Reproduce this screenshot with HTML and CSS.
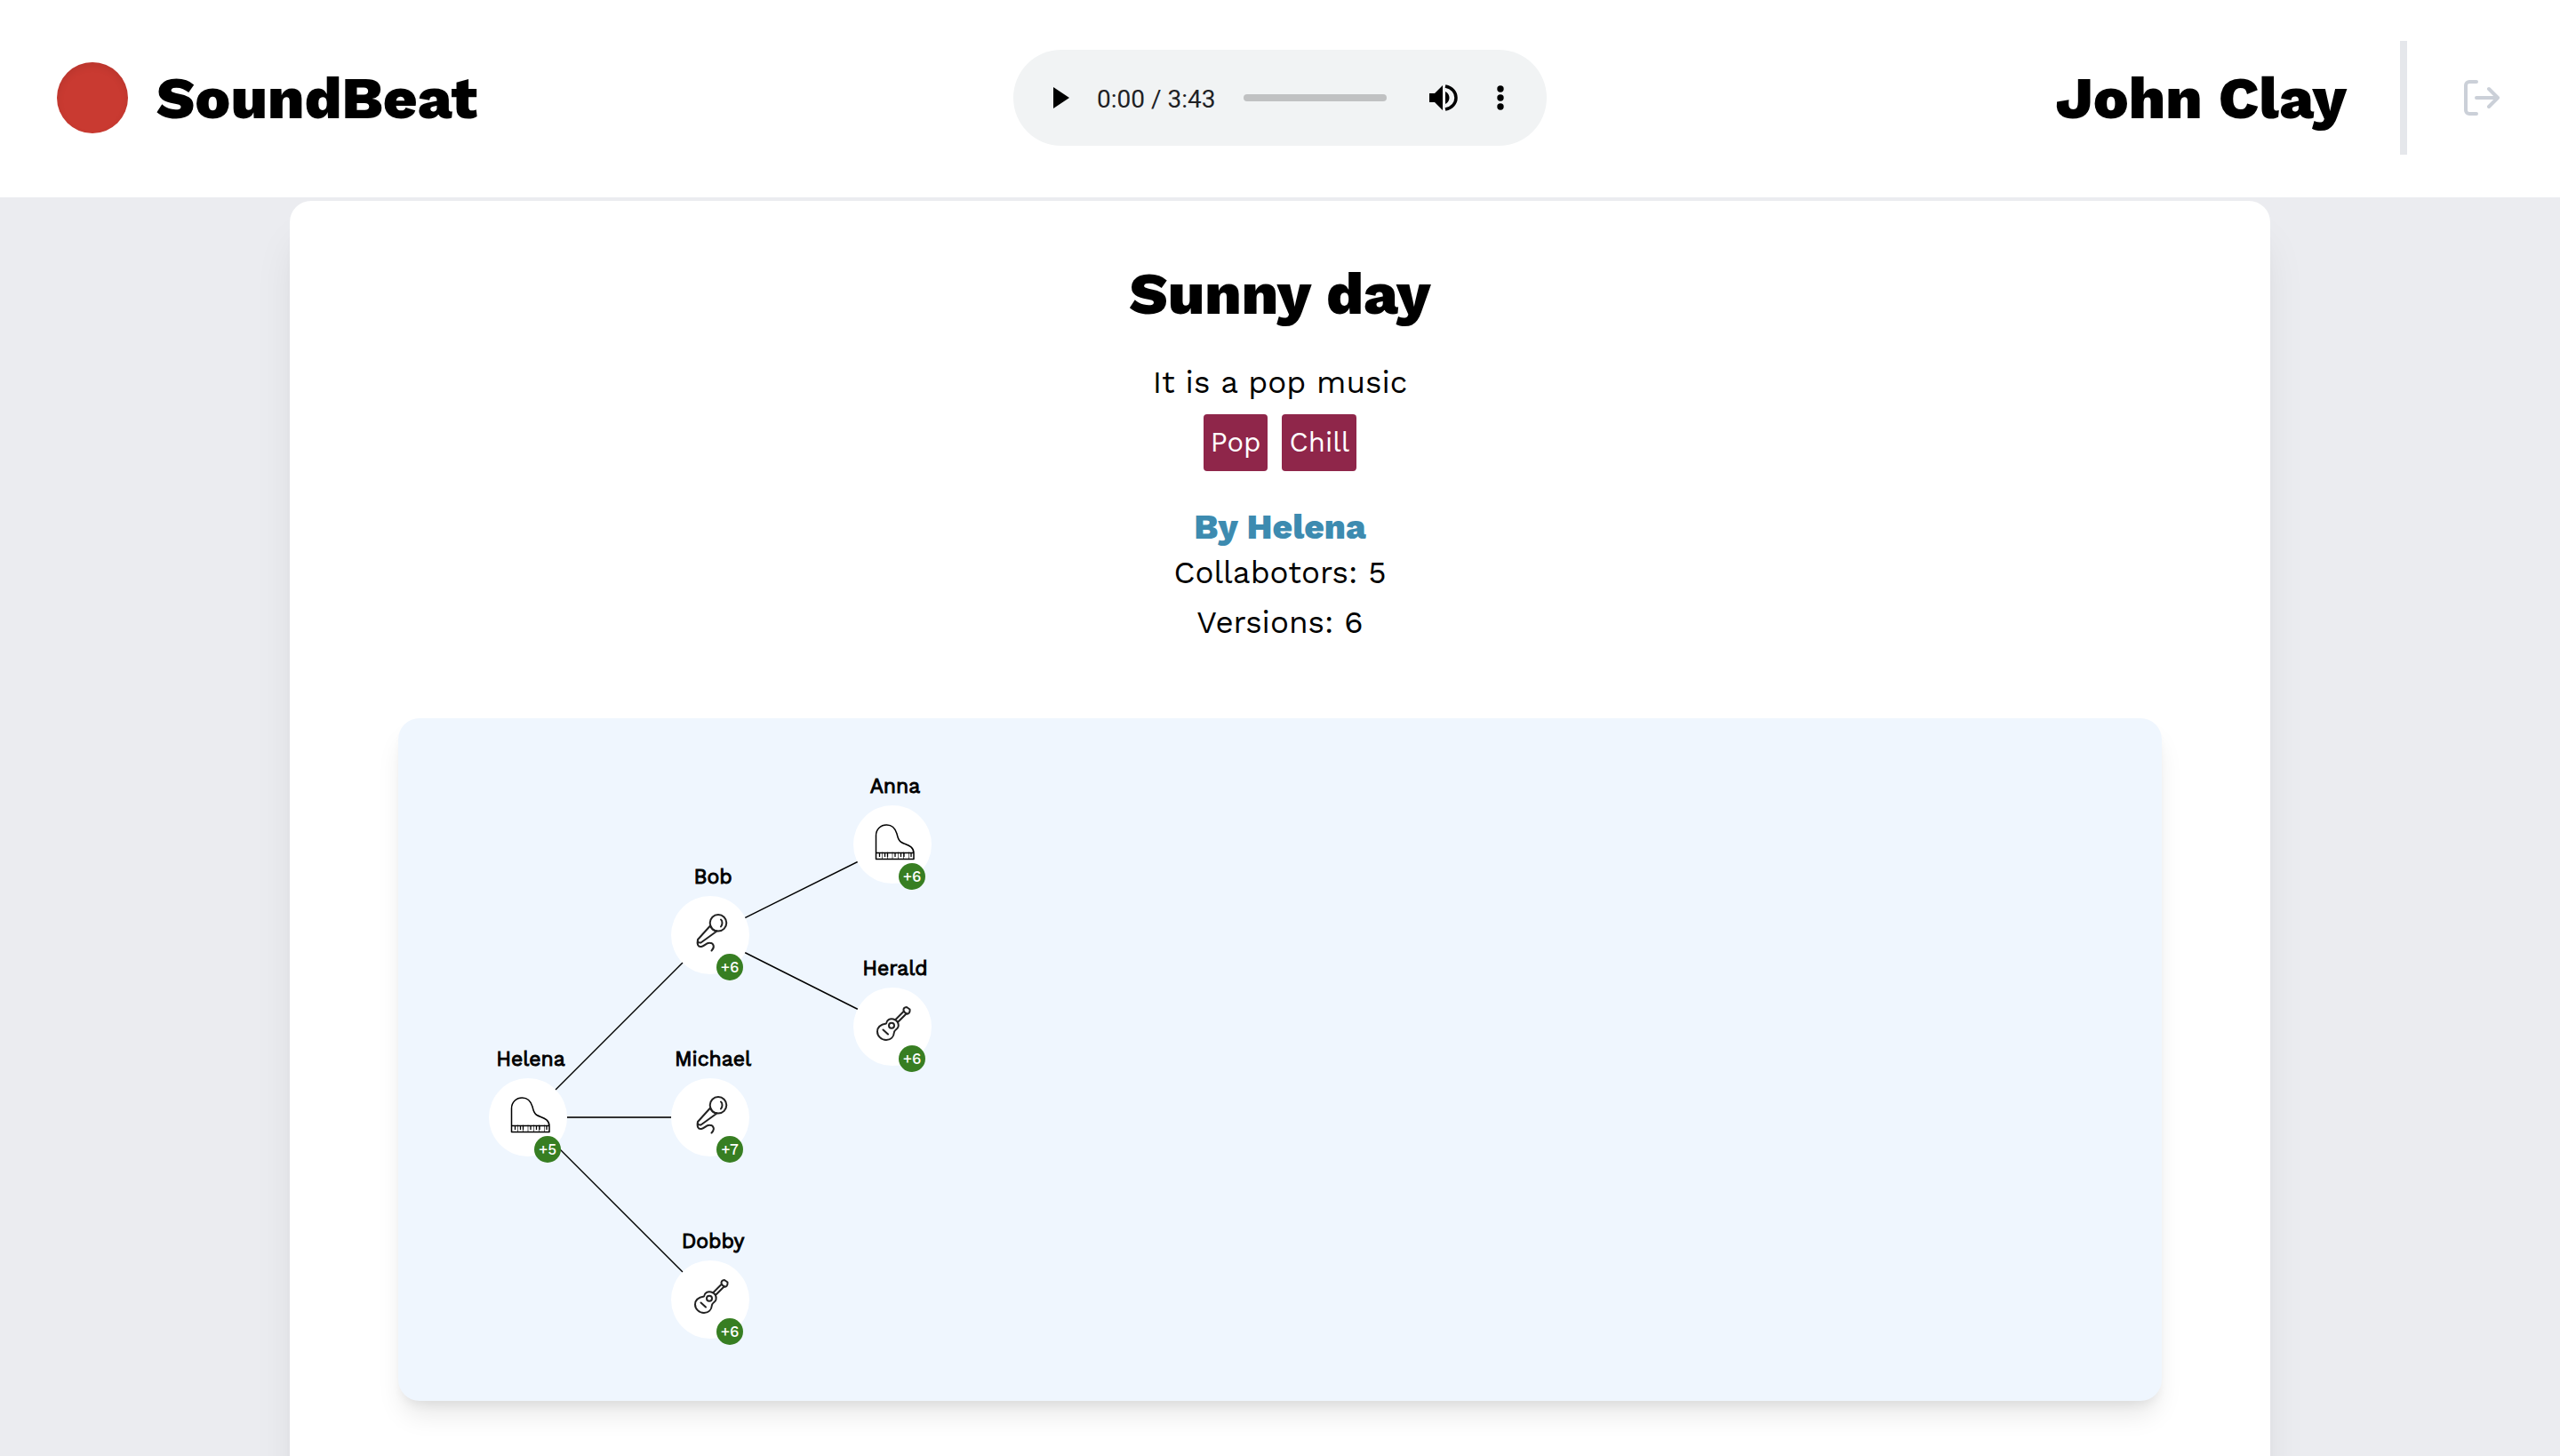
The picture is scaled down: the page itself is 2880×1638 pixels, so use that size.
FILE: index.html
```html
<!DOCTYPE html>
<html lang="en">
<head>
<meta charset="utf-8">
<title>SoundBeat</title>
<link rel="stylesheet" href="styles.css">
</head>
<body>
<svg class="sprite" aria-hidden="true">
  <symbol id="piano" viewBox="0 0 88 88">
    <path d="M25.500 54V34C25.500 26.500 31 22 37.500 22C44 22 47.500 27 49 32C50 36 50.500 39.500 54 41.500C59 44.500 68 45 68 54V60.500H25.500ZM25.500 53.500H68" stroke="#000" stroke-width="1.500"/>
    <path d="M32.500 53V60M38.500 53V60M44 53V60M50.500 53V60M56.500 53V60M62.500 53V60" stroke="#000" stroke-width=".6"/>
    <path d="M29.500 53.500V58M35.500 53.500V58M38.500 53.500V58M47 53.500V58M53.500 53.500V58M57 53.500V58M65 53.500V58" stroke="#000" stroke-width="1.300" stroke-linecap="butt"/>
  </symbol>
  <symbol id="mic" viewBox="0 0 88 88">
    <circle cx="53" cy="30.300" r="9.300"/>
    <path d="M56 26.500C58 28 58 32 56 34.500M44 33.500L30 49M51.500 39.500L33.500 52.500M44 33.500C45 36.500 48 39.500 51.500 39.500M30 49C29.500 51.500 31 53 33.500 52.500M30 49C29 54 30 57.500 34 57C38 56.500 39 52.500 43.500 52.800C48 53 49.500 57.500 45.500 61.500"/>
  </symbol>
  <symbol id="guitar" viewBox="0 0 88 88">
    <path d="M37 40.500C37.500 36.500 41 34.500 45 35.500C49 36.500 51.500 40 50.500 44C49.500 47.500 46.500 47 46 50C45.500 55.500 42 59 37 59C31.500 59 27 54.500 27 49.500C27 44 31 41.500 37 40.500ZM47 36.500L57 26.500M50 39L60 29M57 27C55.500 24 57.500 22 60 22L63.500 24.500C64 28 62 30.500 59.500 29.500ZM33.500 47.500L39 52.500"/>
    <circle cx="43" cy="42.700" r="3"/>
  </symbol>
</svg>

<header class="topbar">
  <a class="brand" href="#"><span class="brand-dot"></span>SoundBeat</a>
  <div class="player">
    <button class="player-play" aria-label="Play"><svg width="18" height="24" viewBox="0 0 18 24"><path d="M0 0L18 12L0 24Z"/></svg></button>
    <span class="player-time">0:00 / 3:43</span>
    <input class="player-track" type="range" min="0" max="223" value="0" aria-label="Position">
    <button class="player-volume" aria-label="Mute"><svg width="32" height="30" viewBox="0 0 32 30"><path d="M0 10H6L15 1V29L6 20H0ZM18 8C24 11 24 19 18 22Z"/><path d="M18 2C34 5 34 25 18 28" fill="none" stroke="#000" stroke-width="3.500"/></svg></button>
    <button class="player-more" aria-label="More options"><svg width="8" height="28" viewBox="0 0 8 28"><circle cx="4" cy="4" r="3.700"/><circle cx="4" cy="14" r="3.700"/><circle cx="4" cy="24" r="3.700"/></svg></button>
  </div>
  <div class="account">
    <span class="account-name">John Clay</span>
    <span class="divider"></span>
    <button class="logout" aria-label="Log out"><svg width="40" height="40" viewBox="0 0 40 40"><path d="M14 2H6a4 4 0 0 0-4 4v28a4 4 0 0 0 4 4h8M14 20h24M28 10l10 10-10 10"/></svg></button>
  </div>
</header>

<main class="card">
  <h1 class="title">Sunny day</h1>
  <p class="line">It is a pop music</p>
  <ul class="tags"><li>Pop</li><li>Chill</li></ul>
  <h2 class="author">By Helena</h2>
  <p class="line">Collabotors: 5</p>
  <p class="line">Versions: 6</p>

  <section class="tree" aria-label="Versions">
    <svg class="links" width="700" height="768" viewBox="0 0 700 768">
      <path d="M146 449L351 244L556 142M351 244L556 347M351 654L146 449"/>
      <path d="M146 449H351" class="link-flat"/>
    </svg>
    <div class="node" style="left:146px;top:449px"><span class="name">Helena</span><svg class="icon"><use href="#piano"/></svg><span class="badge">+5</span></div>
    <div class="node" style="left:351px;top:244px"><span class="name">Bob</span><svg class="icon"><use href="#mic"/></svg><span class="badge">+6</span></div>
    <div class="node" style="left:351px;top:449px"><span class="name">Michael</span><svg class="icon"><use href="#mic"/></svg><span class="badge">+7</span></div>
    <div class="node" style="left:351px;top:654px"><span class="name">Dobby</span><svg class="icon"><use href="#guitar"/></svg><span class="badge">+6</span></div>
    <div class="node" style="left:556px;top:142px"><span class="name">Anna</span><svg class="icon"><use href="#piano"/></svg><span class="badge">+6</span></div>
    <div class="node" style="left:556px;top:347px"><span class="name">Herald</span><svg class="icon"><use href="#guitar"/></svg><span class="badge">+6</span></div>
  </section>
</main>
</body>
</html>
```
FILE: styles.css
```css
* { box-sizing: border-box; }

body {
  margin: 0;
  background: #ebecf0;
  color: #000;
  font-family: "Work Sans", Inter, "Liberation Sans", sans-serif;
}

h1, h2, p, ul { margin: 0; padding: 0; }

html { scrollbar-width: none; }

button {
  display: flex;
  padding: 0;
  border: 0;
  background: none;
}

.sprite { position: absolute; width: 0; height: 0; }

.topbar {
  display: grid;
  grid-template-columns: 1fr 600px 1fr;
  align-items: center;
  height: 222px;
  padding: 0 64px 2px;
  background: #fff;
}

.brand,
.account-name,
.title {
  font-size: 67px;
  font-weight: 800;
  line-height: 80px;
}

.brand {
  display: flex;
  align-items: center;
  gap: 32px;
  color: #000;
  text-decoration: none;
}

.brand-dot {
  width: 80px;
  height: 80px;
  border-radius: 50%;
  background: #c93a31;
  box-shadow: inset 0 4px 8px rgba(0, 0, 0, .08);
}

.player {
  display: flex;
  align-items: center;
  height: 108px;
  padding: 0 48px 0 45px;
  border-radius: 54px;
  background: #f1f3f4;
}

.player-time {
  margin-left: 31px;
  padding-top: 4px;
  font: 28px/32px Roboto, sans-serif;
  color: #202124;
  white-space: nowrap;
}

.player-track {
  flex: 1;
  min-width: 0;
  height: 8px;
  margin: 0 48px 0 32px;
  border-radius: 4px;
  background: #c0c1c2;
  appearance: none;
}

.player-track::-webkit-slider-thumb { appearance: none; width: 0; height: 0; }

.player-more { margin-left: 44px; }

.account {
  display: flex;
  align-items: center;
  justify-content: flex-end;
}

.divider {
  width: 8px;
  height: 128px;
  margin: 0 64px 0 60px;
  background: #e5e7eb;
}

.logout { margin-right: 4px; }

.logout path {
  fill: none;
  stroke: #cbd0d8;
  stroke-width: 4;
  stroke-linecap: round;
  stroke-linejoin: round;
}

.card {
  margin: 4px 326px 0;
  padding: 64px 122px 96px;
  border-radius: 24px;
  background: #fff;
  box-shadow: 0 40px 50px -10px rgba(0, 0, 0, .1), 0 20px 20px -10px rgba(0, 0, 0, .04);
  text-align: center;
}

.title { margin-bottom: 32px; }

.line {
  font-size: 35px;
  line-height: 56px;
}

.tags {
  display: flex;
  justify-content: center;
  gap: 16px;
  margin: 8px 0 40px;
  list-style: none;
}

.tags li {
  padding: 0 8px;
  border-radius: 4px;
  background: #8f264a;
  color: #fff;
  font-size: 31px;
  line-height: 64px;
}

.author {
  color: #3d8bb0;
  font-size: 39px;
  font-weight: 800;
  line-height: 46px;
}

.tree {
  position: relative;
  height: 768px;
  margin-top: 80px;
  border-radius: 24px;
  background: #eff6fe;
  box-shadow: 0 20px 30px -6px rgba(0, 0, 0, .1), 0 8px 12px -4px rgba(0, 0, 0, .06);
}

.links { position: absolute; left: 0; top: 0; }
.links path { fill: none; stroke: #000; stroke-width: 1.4; }
.links .link-flat { stroke: #333; stroke-width: 2; }

.node {
  position: absolute;
  width: 88px;
  height: 88px;
  margin: -44px 0 0 -44px;
  border-radius: 50%;
  background: #fff;
}

.icon {
  display: block;
  width: 88px;
  height: 88px;
  fill: none;
  stroke: #222;
  stroke-width: 2;
  stroke-linecap: round;
  stroke-linejoin: round;
}

.name {
  position: absolute;
  left: -28px;
  bottom: 95px;
  width: 150px;
  font-size: 23px;
  line-height: 28px;
  -webkit-text-stroke: 1px #000;
}

.badge {
  position: absolute;
  left: 51px;
  top: 65px;
  width: 30px;
  height: 30px;
  border-radius: 50%;
  background: #377e22;
  color: #fff;
  font-size: 17px;
  font-weight: 500;
  line-height: 30px;
}
```
